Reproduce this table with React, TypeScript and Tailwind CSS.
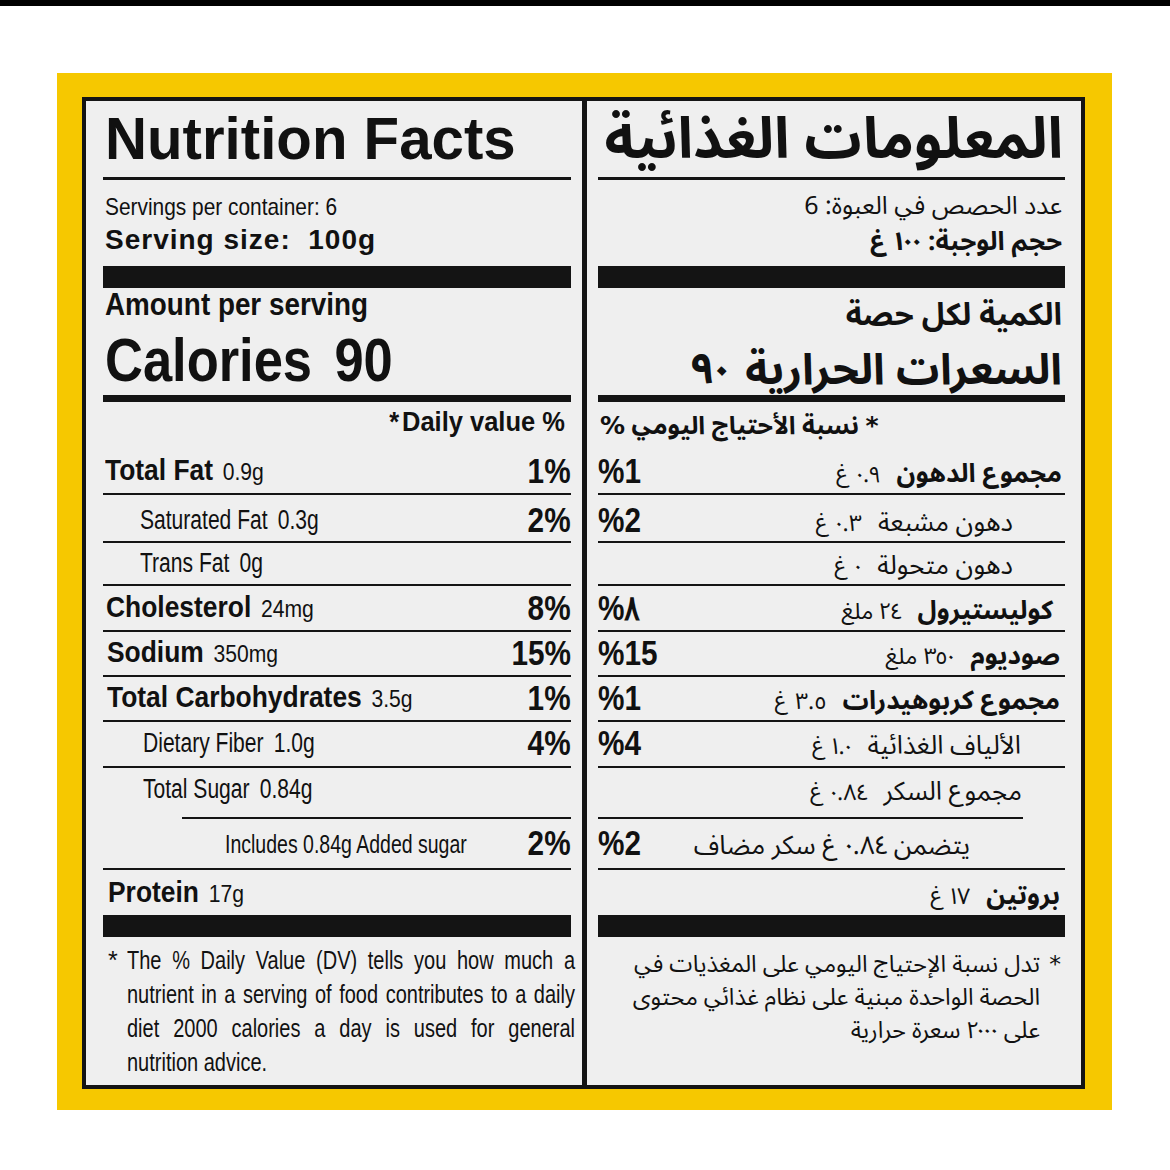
import React from 'react';

const LAT = "font-['Liberation_Sans',Arial,sans-serif]";
const AR = "font-['Noto_Sans_Arabic_UI','DejaVu_Sans',sans-serif]";

type Row = {
  label: string;
  val?: string;
  pct?: string;
  bold?: boolean;
  h: string;
  pb: string;
  indent: string;
  line?: string;
  size?: string;
};

const enRows: Row[] = [
  { label: 'Total Fat', val: '0.9g', pct: '1%', bold: true, h: 'h-[46px]', pb: 'pb-[8px]', indent: 'pl-[2px]' },
  { label: 'Saturated Fat', val: '0.3g', pct: '2%', h: 'h-[46px]', pb: 'pb-[7px]', indent: 'pl-[37px]' },
  { label: 'Trans Fat', val: '0g', h: 'h-[41px]', pb: 'pb-[7px]', indent: 'pl-[37px]' },
  { label: 'Cholesterol', val: '24mg', pct: '8%', bold: true, h: 'h-[44px]', pb: 'pb-[8px]', indent: 'pl-[3px]' },
  { label: 'Sodium', val: '350mg', pct: '15%', bold: true, h: 'h-[43px]', pb: 'pb-[8px]', indent: 'pl-[4px]' },
  { label: 'Total Carbohydrates', val: '3.5g', pct: '1%', bold: true, h: 'h-[43px]', pb: 'pb-[8px]', indent: 'pl-[4px]' },
  { label: 'Dietary Fiber', val: '1.0g', pct: '4%', h: 'h-[44px]', pb: 'pb-[9px]', indent: 'pl-[40px]' },
  { label: 'Total Sugar', val: '0.84g', h: 'h-[49px]', pb: 'pb-[14px]', indent: 'pl-[40px]', line: 'ml-[79px]' },
  { label: 'Includes 0.84g Added sugar', pct: '2%', h: 'h-[49px]', pb: 'pb-[11px]', indent: 'pl-[122px]', size: 'small' },
  { label: 'Protein', val: '17g', bold: true, h: 'h-[45px]', pb: 'pb-[8px]', indent: 'pl-[5px]', line: 'none' },
];

const arRows: Row[] = [
  { label: 'مجموع الدهون', val: '٠.٩ غ', pct: '%1', bold: true, h: 'h-[46px]', pb: 'pb-[8px]', indent: 'pr-[3px]' },
  { label: 'دهون مشبعة', val: '٠.٣ غ', pct: '%2', h: 'h-[46px]', pb: 'pb-[7px]', indent: 'pr-[52px]' },
  { label: 'دهون متحولة', val: '٠ غ', h: 'h-[41px]', pb: 'pb-[7px]', indent: 'pr-[52px]' },
  { label: 'كوليستيرول', val: '٢٤ ملغ', pct: '%٨', bold: true, h: 'h-[44px]', pb: 'pb-[8px]', indent: 'pr-[12px]' },
  { label: 'صوديوم', val: '٣٥٠ ملغ', pct: '%15', bold: true, h: 'h-[43px]', pb: 'pb-[8px]', indent: 'pr-[5px]' },
  { label: 'مجموع كربوهيدرات', val: '٣.٥ غ', pct: '%1', bold: true, h: 'h-[43px]', pb: 'pb-[8px]', indent: 'pr-[5px]' },
  { label: 'الألياف الغذائية', val: '١.٠ غ', pct: '%4', h: 'h-[44px]', pb: 'pb-[9px]', indent: 'pr-[44px]' },
  { label: 'مجموع السكر', val: '٠.٨٤ غ', h: 'h-[49px]', pb: 'pb-[14px]', indent: 'pr-[43px]', line: 'mr-[42px]' },
  { label: 'يتضمن ٠.٨٤ غ سكر مضاف', pct: '%2', h: 'h-[49px]', pb: 'pb-[11px]', indent: 'pr-[95px]' },
  { label: 'بروتين', val: '١٧ غ', bold: true, h: 'h-[45px]', pb: 'pb-[8px]', indent: 'pr-[5px]', line: 'none' },
];

function labelClass(r: Row) {
  if (r.bold) return 'scale-x-[0.88] text-[30px] font-bold';
  if (r.size === 'small') return 'scale-x-[0.75] text-[26px]';
  return 'scale-x-[0.78] text-[27px]';
}

function EnRow({ r }: { r: Row }) {
  return (
    <>
      <div className={`flex items-end justify-between ${r.h} ${r.pb} ${r.indent}`}>
        <span className={`${labelClass(r)} inline-block min-w-0 origin-left whitespace-nowrap leading-none`}>
          {r.label}
          {r.val && (
            <span className={`${r.bold ? 'ps-[11px] text-[24px]' : 'ps-[13px]'} font-normal`}>{r.val}</span>
          )}
        </span>
        {r.pct && (
          <span className="-mb-[3px] inline-block shrink-0 origin-right scale-x-[0.85] text-[35px] font-bold leading-none">
            {r.pct}
          </span>
        )}
      </div>
      {r.line !== 'none' && <div className={`h-[2px] bg-[#141414] ${r.line ?? ''}`} />}
    </>
  );
}

function ArRow({ r }: { r: Row }) {
  return (
    <>
      <div className={`flex items-end justify-between ${r.h} ${r.pb} ${r.indent}`}>
        <span className={`${r.bold ? 'font-bold' : ''} whitespace-nowrap text-[26px] leading-none`}>
          {r.label}
          {r.val && <span className="ps-[16px] text-[23px] font-normal">{r.val}</span>}
        </span>
        {r.pct && (
          <span
            dir="ltr"
            className={`${LAT} -mb-[3px] inline-block shrink-0 origin-left scale-x-[0.85] text-[35px] font-bold leading-none`}
          >
            {r.pct}
          </span>
        )}
      </div>
      {r.line !== 'none' && <div className={`h-[2px] bg-[#141414] ${r.line ?? ''}`} />}
    </>
  );
}

function EnglishPanel() {
  const notes = [
    'The % Daily Value (DV) tells you how much a',
    'nutrient in a serving of food contributes to a daily',
    'diet 2000 calories a day is used for general',
  ];
  return (
    <div className={`${LAT} flex w-[501px] flex-col border-r-[5px] border-[#141414] pl-[17px] pr-[11px]`}>
      <div className="flex h-[76px] items-end pb-[8px] pl-[2px]">
        <h1 className="origin-left scale-x-[0.97] whitespace-nowrap text-[60px] font-bold leading-none">
          Nutrition Facts
        </h1>
      </div>
      <div className="h-[3px] bg-[#141414]" />
      <div className="flex h-[86px] flex-col items-start justify-end pb-[12px] pl-[2px]">
        <p className="origin-left scale-x-[0.87] whitespace-nowrap text-[24px] leading-none">
          Servings per container: 6
        </p>
        <p className="mt-[7px] whitespace-nowrap text-[28px] font-bold leading-none tracking-[1px]">
          Serving size:&nbsp; 100g
        </p>
      </div>
      <div className="h-[22px] bg-[#141414]" />
      <div className="flex h-[107px] flex-col items-start justify-end pb-[4px] pl-[2px]">
        <p className="origin-left scale-x-[0.87] whitespace-nowrap text-[32px] font-bold leading-none">
          Amount per serving
        </p>
        <p className="mt-[10px] origin-left scale-x-[0.86] whitespace-nowrap text-[61px] font-bold leading-none">
          Calories<span className="ml-[26px]">90</span>
        </p>
      </div>
      <div className="h-[7px] bg-[#141414]" />
      <div className="flex h-[45px] items-end justify-end pb-[11px] pr-[6px]">
        <p className="origin-right scale-x-[0.91] whitespace-nowrap text-[28px] font-bold leading-none">
          *<span className="ml-[3px]">Daily value %</span>
        </p>
      </div>
      {enRows.map((r) => (
        <EnRow key={r.label} r={r} />
      ))}
      <div className="h-[22px] bg-[#141414]" />
      <div className="flex pt-[6px] text-[25px] leading-[34px]">
        <span className="w-[24px] shrink-0 pl-[5px]">*</span>
        <div className="w-[560px] shrink-0 origin-left scale-x-[0.8]">
          {notes.map((n) => (
            <div key={n} className="whitespace-nowrap text-justify [text-align-last:justify]">
              {n}
            </div>
          ))}
          <div>nutrition advice.</div>
        </div>
      </div>
    </div>
  );
}

function ArabicPanel() {
  return (
    <div dir="rtl" className={`${AR} flex min-w-0 flex-1 flex-col pl-[11px] pr-[16px]`}>
      <div className="flex h-[76px] items-end pb-[12px] pr-[2px]">
        <h1 className="whitespace-nowrap text-[57px] font-bold leading-none">المعلومات الغذائية</h1>
      </div>
      <div className="h-[3px] bg-[#141414]" />
      <div className="flex h-[86px] flex-col justify-end pb-[13px] pr-[3px]">
        <p className="text-[25px] leading-none">عدد الحصص في العبوة: 6</p>
        <p className="mt-[10px] text-[26px] font-bold leading-none">حجم الوجبة: ١٠٠ غ</p>
      </div>
      <div className="h-[22px] bg-[#141414]" />
      <div className="flex h-[107px] flex-col justify-end pb-[6px] pr-[3px]">
        <p className="text-[31px] font-bold leading-none">الكمية لكل حصة</p>
        <p className="mt-[17px] whitespace-nowrap text-[43px] font-bold leading-none">
          السعرات الحرارية<span className="ms-[16px]">٩٠</span>
        </p>
      </div>
      <div className="h-[7px] bg-[#141414]" />
      <div className="flex h-[45px] items-end justify-end pb-[10px] pl-[2px]">
        <p className="text-[25px] font-bold leading-none">* نسبة الأحتياج اليومي %</p>
      </div>
      {arRows.map((r) => (
        <ArRow key={r.label} r={r} />
      ))}
      <div className="h-[22px] bg-[#141414]" />
      <div className="flex pt-[10px] text-[23.5px] leading-[33px]">
        <span className="w-[25px] shrink-0 pr-[4px]">*</span>
        <div>
          <div>تدل نسبة الإحتياج اليومي على المغذيات في</div>
          <div>الحصة الواحدة مبنية على نظام غذائي محتوى</div>
          <div>على ٢٠٠٠ سعرة حرارية</div>
        </div>
      </div>
    </div>
  );
}

export default function App() {
  return (
    <div className="min-h-[1170px] w-[1170px] bg-white">
      <div className="h-[6px] bg-black" />
      <div className="ml-[57px] mt-[67px] h-[1037px] w-[1055px] bg-[#f6c800] pl-[25px] pt-[24px]">
        <div className="flex h-[992px] w-[1003px] border-4 border-[#141414] bg-[#efefef] text-[#111]">
          <EnglishPanel />
          <ArabicPanel />
        </div>
      </div>
    </div>
  );
}
